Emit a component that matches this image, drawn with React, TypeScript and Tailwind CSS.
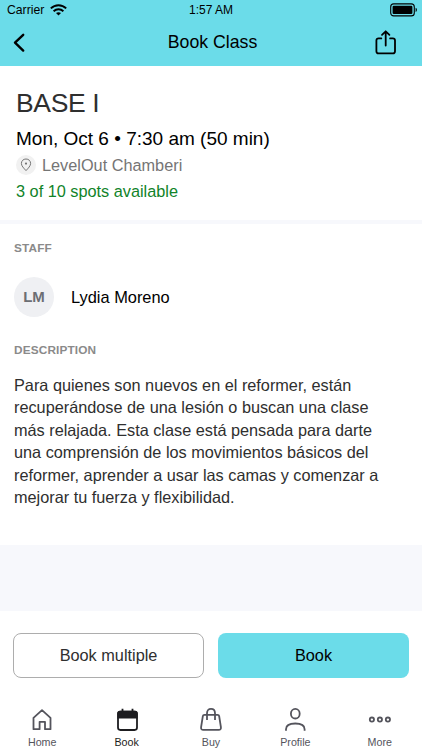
import type { ReactNode } from "react";

type TabProps = {
  active?: boolean;
  children: ReactNode;
  label: string;
};

const description =
  "Para quienes son nuevos en el reformer, están recuperándose de una lesión o buscan una clase más relajada. Esta clase está pensada para darte una comprensión de los movimientos básicos del reformer, aprender a usar las camas y comenzar a mejorar tu fuerza y flexibilidad.";

function StatusBar() {
  return (
    <div className="grid h-5 grid-cols-3 items-center pr-[4px] pl-[7px] text-[12.2px] leading-none">
      <div className="flex items-center gap-[6px]">
        <span>Carrier</span>
        <svg width="17" height="12" viewBox="0 0 17 12" fill="none" stroke="black" strokeWidth="1.9">
          <path d="M0.8 4.4C5.1 0.1 11.9 0.1 16.2 4.4" />
          <path d="M3.6 7.2C6.4 4.5 10.6 4.5 13.4 7.2" />
          <path d="M8.5 11.6L6 9.1C7.4 7.9 9.6 7.9 11 9.1Z" fill="black" stroke="none" />
        </svg>
      </div>
      <span className="pr-[3px] text-center text-[12px]">1:57 AM</span>
      <svg className="justify-self-end" width="28" height="14" viewBox="0 0 28 14">
        <rect x="0.7" y="0.9" width="23.6" height="12" rx="3" fill="none" stroke="black" strokeWidth="1.1" />
        <rect x="2.6" y="2.8" width="19.8" height="8.2" rx="1.1" />
        <path d="M25.6 4.8C27.4 5.4 27.4 8.4 25.6 9Z" />
      </svg>
    </div>
  );
}

function Header() {
  return (
    <header className="h-[66px] bg-[#6bdce9] text-black">
      <StatusBar />
      <div className="grid h-[46px] grid-cols-3 items-center px-[13px]">
        <button aria-label="Back">
          <svg width="13" height="20" viewBox="0 0 13 20" fill="none" stroke="black" strokeWidth="2.4" strokeLinecap="round" strokeLinejoin="round">
            <path d="M10.2 1.8L2 9.7L10.2 17.6" />
          </svg>
        </button>
        <h1 className="pl-[3px] text-center text-[17.7px] leading-none whitespace-nowrap">Book Class</h1>
        <button className="mr-3 justify-self-end" aria-label="Share">
          <svg width="22" height="26" viewBox="0 0 22 26" fill="none" stroke="black" strokeWidth="1.8" strokeLinecap="round" strokeLinejoin="round">
            <path d="M6.3 8.4H3.6C2.2 8.4 1.4 9.2 1.4 10.6V21.2C1.4 22.6 2.2 23.4 3.6 23.4H17.8C19.2 23.4 20 22.6 20 21.2V10.6C20 9.2 19.2 8.4 17.8 8.4H15.1" />
            <path d="M10.7 15.6V1.4M7 4.9L10.7 1.3L14.4 4.9" />
          </svg>
        </button>
      </div>
    </header>
  );
}

function Tab({ active, children, label }: TabProps) {
  return (
    <a
      className={
        active
          ? "flex flex-col items-center gap-[3px] text-[#1d1d20]"
          : "flex flex-col items-center gap-[3px] text-[#54545c]"
      }
    >
      <svg width="26" height="26" viewBox="0 0 26 26" fill="none" stroke="currentColor" strokeWidth="1.8" strokeLinejoin="round">
        {children}
      </svg>
      <span className="text-[10.7px] leading-3">{label}</span>
    </a>
  );
}

export default function App() {
  return (
    <div className="flex h-[750px] w-[422px] flex-col overflow-hidden bg-white font-['Liberation_Sans',Arial,sans-serif]">
      <Header />

      <section className="h-[154px] px-4 pt-[22px]">
        <h2 className="text-[26.5px] leading-[30px] tracking-[-0.35px] text-[#2f2f2f]">BASE I</h2>
        <p className="mt-[11px] text-[19px] leading-5 text-black">Mon, Oct 6 • 7:30 am (50 min)</p>
        <div className="mt-[6px] flex h-5 items-center gap-[6px]">
          <span className="flex size-5 items-center justify-center rounded-full bg-[#f1f1f1]">
            <svg width="12" height="14" viewBox="0 0 12 14" fill="none" stroke="#757575" strokeWidth="1">
              <path d="M6 12.6C3.8 10.2 1.4 8 1.4 5.4C1.4 2.8 3.4 1 6 1S10.6 2.8 10.6 5.4C10.6 8 8.2 10.2 6 12.6Z" />
              <circle cx="6" cy="5.6" r="1.1" fill="#757575" stroke="none" />
            </svg>
          </span>
          <span className="text-[16.3px] leading-5 text-[#757575]">LevelOut Chamberi</span>
        </div>
        <p className="mt-[6px] text-[16.3px] leading-5 text-[#108329]">3 of 10 spots available</p>
      </section>

      <div className="h-1 bg-[#f7f8fc]" />

      <section className="h-[321px] pt-[17px] pr-6 pl-[14px]">
        <h3 className="text-[11.8px] leading-[14px] font-bold tracking-[0.15px] text-[#8a8a8a]">STAFF</h3>
        <div className="mt-[22px] flex items-center gap-[17px]">
          <span className="flex size-10 items-center justify-center rounded-full bg-[#eff0f3] text-[15px] font-bold text-[#6c6e74]">
            LM
          </span>
          <span className="text-[16.4px] text-black">Lydia Moreno</span>
        </div>
        <h3 className="mt-[26px] text-[11.8px] leading-[14px] font-bold tracking-[0.15px] text-[#8a8a8a]">DESCRIPTION</h3>
        <p className="mt-[17px] text-[16.28px] leading-[22.4px] text-[#2f2f2f]">{description}</p>
      </section>

      <div className="h-[66px] bg-[#f7f8fc]" />

      <div className="grid grid-cols-2 gap-[14px] px-[13px] pt-[22px]">
        <button className="h-[45px] rounded-lg border border-[#adadad] text-[16.3px] text-[#2f2f2f]">Book multiple</button>
        <button className="h-[45px] rounded-lg bg-[#6bdce9] text-[16.3px] text-black">Book</button>
      </div>

      <nav className="mt-[29px] grid grid-cols-5">
        <Tab label="Home">
          <path d="M4.5 22.2V10.8L13 3.2L21.5 10.8V22.2H16V14.8H10.6V22.2Z" />
        </Tab>
        <Tab label="Book" active>
          <rect x="4" y="4.6" width="19" height="18.4" rx="2.4" />
          <path d="M3.4 11.5V6.2C3.4 4.7 4.4 3.8 5.9 3.8H21.1C22.6 3.8 23.6 4.7 23.6 6.2V11.5Z" fill="currentColor" stroke="none" />
          <path d="M8.5 1.8V6M18.5 1.8V6" />
        </Tab>
        <Tab label="Buy">
          <path d="M6.4 7.9H19.6C20.5 7.9 21 8.4 21.2 9.3L22.9 20.2C23.2 22 22.3 22.9 20.7 22.9H5.3C3.7 22.9 2.8 22 3.1 20.2L4.8 9.3C5 8.4 5.5 7.9 6.4 7.9Z" />
          <path d="M9 13V6.2C9 3.6 10.5 1.9 13 1.9S17 3.6 17 6.2V13" />
        </Tab>
        <Tab label="Profile">
          <ellipse cx="13.3" cy="6.7" rx="4.4" ry="4.8" />
          <path d="M4 23.8V22.2C4 18.3 7.6 16.5 13.3 16.5S22.6 18.3 22.6 22.2V23.8" />
        </Tab>
        <Tab label="More">
          <circle cx="4.9" cy="12.6" r="2.1" />
          <circle cx="12.9" cy="12.6" r="2.1" />
          <circle cx="20.9" cy="12.6" r="2.1" />
        </Tab>
      </nav>
    </div>
  );
}
